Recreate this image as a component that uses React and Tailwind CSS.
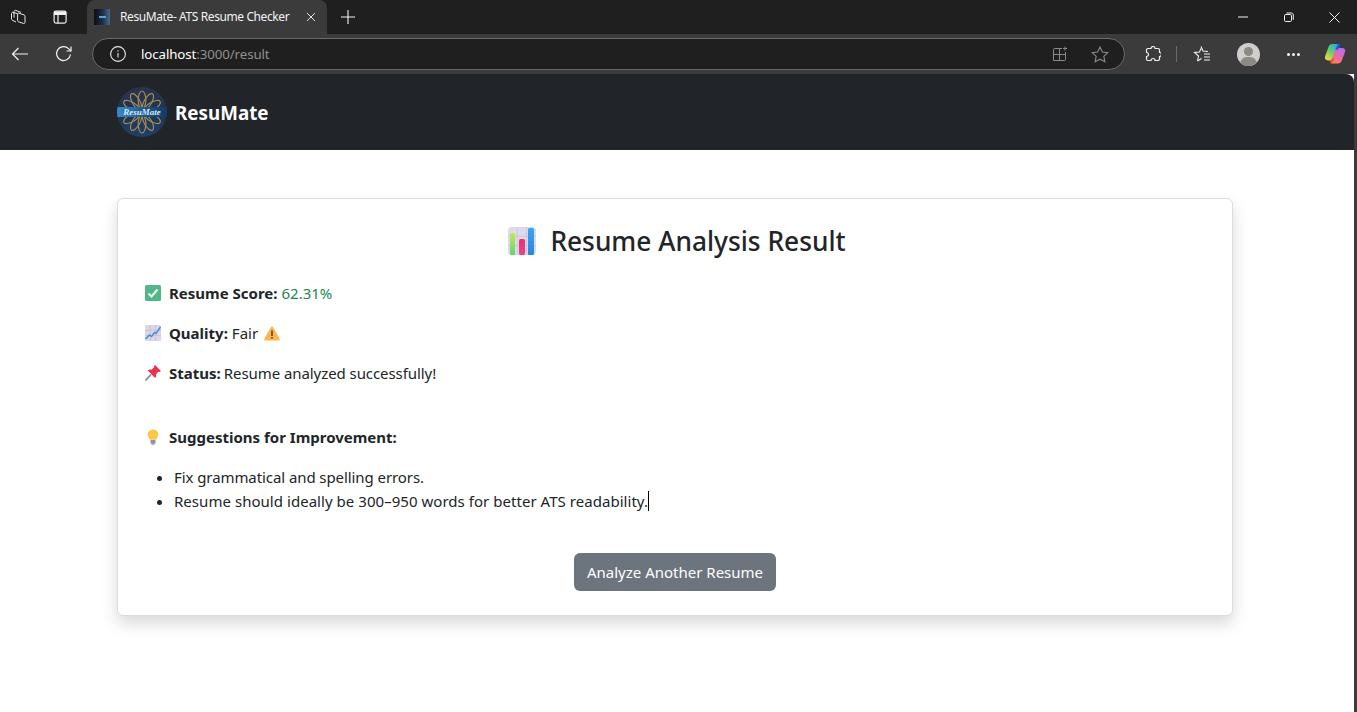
import React from "react";

const fontStack = "font-['Noto_Sans','Open_Sans',sans-serif]";

function ChromeButton({ children, className = "" }) {
  return <div className={`flex items-center justify-center ${className}`}>{children}</div>;
}

function TabsIcon() {
  return (
    <svg width="18" height="18" viewBox="0 0 18 18" fill="none" stroke="#e8e8e8" strokeWidth="1">
      <path d="M9.500 5l5.700 2c.5.2.8.6.8 1.100v6.400c0 .7-.7 1.200-1.400 1l-5-1.700c-.6-.2-1-.7-1-1.300V6c0-.7.3-1.200.9-1z" />
      <path d="M7 14L3.400 12.300c-.5-.3-.9-.8-.9-1.400V5.500c0-.8.7-1.300 1.500-1.100l4 1.100" />
      <path d="M5 9.500V3.600c0-.9.800-1.500 1.700-1.200l5.300 2" />
    </svg>
  );
}

function VerticalTabsIcon() {
  return (
    <svg width="16" height="16" viewBox="0 0 16 16" fill="none" stroke="#f0f0f0" strokeWidth="1.200">
      <rect x="2.100" y="2.100" width="12" height="12" rx="1.800" />
      <path d="M2.500 3h11v2.500h-11z" fill="#f0f0f0" />
      <path d="M6 5v9" />
    </svg>
  );
}

function Favicon() {
  return (
    <div className="w-4 h-4 bg-gradient-to-r from-[#0b0f18] via-[#1c2b45] to-[#4a6a94] flex items-center justify-center shrink-0">
      <div className="w-[7px] h-[2px] bg-[#5f9fd4]" />
    </div>
  );
}

function LogoBadge() {
  const petals = [0, 30, 60, 90, 120, 150, 180, 210, 240, 270, 300, 330];
  return (
    <div className="relative w-[50px] h-[50px] rounded-full overflow-hidden bg-gradient-to-b from-[#28344a] via-[#1e3450] to-[#1f4068] shrink-0">
      <svg width="50" height="50" viewBox="0 0 50 50" fill="none" stroke="#a98a55" strokeWidth="1.200">
        {petals.map((deg) => (
          <ellipse key={deg} cx="25" cy="13" rx="3.800" ry="9" transform={`rotate(${deg} 25 25)`} />
        ))}
      </svg>
      <div className="absolute left-0 right-0 top-[20px] h-[10px] bg-gradient-to-r from-[#3a8ccb] via-[#1d5c94] to-[#123a66] flex items-center justify-center">
        <span className="font-['Liberation_Serif',serif] italic font-bold text-[9px] leading-none text-[#dfe8f2]">ResuMate</span>
      </div>
    </div>
  );
}

function CheckEmoji() {
  return (
    <svg width="16" height="16" viewBox="0 0 16 16">
      <rect width="16" height="16" rx="1.500" fill="#52b788" />
      <path d="M3.500 8.500l3 3 6-7" fill="none" stroke="#f4fff8" strokeWidth="2" />
    </svg>
  );
}

function ChartUpEmoji() {
  return (
    <svg width="16" height="16" viewBox="0 0 16 16">
      <rect width="16" height="16" rx="1.500" fill="#dcd6e6" />
      <path d="M5.300 0v16M10.600 0v16M0 5.300h16M0 10.600h16" stroke="#bdb5cc" strokeWidth="0.600" />
      <path d="M0.500 14l4-4 2 1.500 3-4 1.500 1L15.500 2" fill="none" stroke="#3f8fd8" strokeWidth="1.500" />
    </svg>
  );
}

function WarningEmoji() {
  return (
    <svg width="16" height="15" viewBox="0 0 16 15">
      <path d="M8 .5c.5 0 .9.3 1.100.7l6.600 11.600c.4.8-.1 1.700-1 1.700H1.300c-.9 0-1.400-.9-1-1.700L6.900 1.200C7.100.8 7.500.5 8 .5z" fill="#fbb552" />
      <rect x="7.300" y="4.500" width="1.400" height="5.500" fill="#4a3420" />
      <rect x="7.300" y="11" width="1.400" height="1.500" fill="#4a3420" />
    </svg>
  );
}

function PinEmoji() {
  return (
    <svg width="16" height="16" viewBox="0 0 16 16">
      <path d="M0.500 15.500l5.500-6" stroke="#8a8a94" strokeWidth="1.800" />
      <path d="M10 0l6 6-1.600 1.100-1.200-.3-2.200 2.600c.4 1.400 0 2.700-.9 3.600L2.700 5.600c.9-.9 2.200-1.300 3.600-.9L9 2.500l-.2-1.300z" fill="#e8324e" />
    </svg>
  );
}

function BulbEmoji() {
  return (
    <svg width="12" height="16" viewBox="0 0 12 16">
      <path d="M6 .5c3 0 5.300 2.200 5.300 5 0 2.200-1.500 3.300-2.300 5.200H3c-.8-1.900-2.300-3-2.300-5.200C.7 2.700 3 .5 6 .5z" fill="#fbc748" />
      <rect x="3.500" y="11" width="5" height="3.500" fill="#9b8bb0" />
      <rect x="4.500" y="14.500" width="3" height="1" fill="#6f6284" />
    </svg>
  );
}

function BarsEmoji() {
  return (
    <svg width="28" height="28" viewBox="0 0 28 28">
      <defs>
        <linearGradient id="barGreen" x1="0" y1="0" x2="0" y2="1">
          <stop offset="0" stopColor="#c6e84e" />
          <stop offset="1" stopColor="#5fd47a" />
        </linearGradient>
        <linearGradient id="barPink" x1="0" y1="0" x2="0" y2="1">
          <stop offset="0" stopColor="#e8327a" />
          <stop offset="1" stopColor="#f0408a" />
        </linearGradient>
        <linearGradient id="barBlue" x1="0" y1="0" x2="0" y2="1">
          <stop offset="0" stopColor="#3aa4f0" />
          <stop offset="1" stopColor="#2b86e0" />
        </linearGradient>
      </defs>
      <rect width="28" height="28" rx="3.500" fill="#dfdae8" />
      <path d="M9.300 0v28M18.600 0v28M0 9.300h28M0 18.600h28" stroke="#c8c2d4" strokeWidth="0.700" />
      <path d="M2 7.500A1.500 1.500 0 0 1 3.500 6h2A1.500 1.500 0 0 1 7 7.500V28H3.500A1.500 1.500 0 0 1 2 26.500z" fill="url(#barGreen)" />
      <rect x="11" y="12" width="6" height="16" rx="1.500" fill="url(#barPink)" />
      <path d="M20 2.500A1.500 1.500 0 0 1 21.500 1h3A1.500 1.500 0 0 1 26 2.500V26.500A1.500 1.500 0 0 1 24.500 28H20z" fill="url(#barBlue)" />
    </svg>
  );
}

function CopilotIcon() {
  return (
    <svg width="22" height="22" viewBox="0 0 22 22">
      <defs>
        <linearGradient id="copilotA" x1="0.800" y1="0" x2="0.200" y2="1">
          <stop offset="0" stopColor="#25a6ee" />
          <stop offset="0.500" stopColor="#5fd36a" />
          <stop offset="1" stopColor="#f7d93e" />
        </linearGradient>
        <linearGradient id="copilotB" x1="0.800" y1="0" x2="0.200" y2="1">
          <stop offset="0" stopColor="#b46cf2" />
          <stop offset="0.600" stopColor="#f06aa0" />
          <stop offset="1" stopColor="#ff8a4a" />
        </linearGradient>
      </defs>
      <path d="M8 1h6c1 0 1.500.6 1.300 1.500L12 15c-.4 1.500-1.500 2.500-3 2.500H5.500C2 17.500.3 16 1.200 13L4.500 4C5.200 2 6.300 1 8 1z" fill="url(#copilotA)" />
      <path d="M13 5h5c2.500 0 3.800 1.500 3 4l-3 8c-.7 2-2 3.500-4 3.500H8c-1 0-1.500-.7-1.200-1.500L11 7c.3-1.200 1-2 2-2z" fill="url(#copilotB)" />
      <path d="M14 1c1.500 0 2.200 1 1.800 2L14 6.500h-2.800z" fill="#1e55e0" />
      <path d="M8 20.500c-1.500 0-2.200-1-1.800-2L8 15.500h2.800z" fill="#f0503c" />
    </svg>
  );
}

function BrowserChrome() {
  return (
    <div className="shrink-0">
      {/* title bar */}
      <div className="h-[34px] bg-[#1f1f1f] flex items-stretch">
        <ChromeButton className="w-[35px] pl-[1px]"><TabsIcon /></ChromeButton>
        <ChromeButton className="w-[49px]"><VerticalTabsIcon /></ChromeButton>
        <div className="w-[240px] ml-[3px] bg-[#3b3b3b] rounded-t-lg flex items-center pl-[7px] pr-[11px]">
          <Favicon />
          <span className="ml-[10px] text-[12px] text-[#f2f2f2] whitespace-nowrap font-['Noto_Sans',sans-serif] tracking-[-0.4px] flex-1">ResuMate- ATS Resume Checker</span>
          <svg width="10" height="10" viewBox="0 0 10 10" stroke="#e5e5e5" strokeWidth="1"><path d="M1 1l8 8M9 1l-8 8" /></svg>
        </div>
        <ChromeButton className="w-[42px]">
          <svg width="14" height="14" viewBox="0 0 14 14" stroke="#f2f2f2" strokeWidth="1.100"><path d="M7 0v14M0 7h14" /></svg>
        </ChromeButton>
        <div className="flex-1" />
        <ChromeButton className="w-[46px]">
          <svg width="10" height="10" viewBox="0 0 10 10" stroke="#f2f2f2" strokeWidth="1"><path d="M0 5h10" /></svg>
        </ChromeButton>
        <ChromeButton className="w-[46px]">
          <svg width="10" height="10" viewBox="0 0 10 10" fill="none" stroke="#f2f2f2" strokeWidth="1"><rect x="0.500" y="2.500" width="7" height="7" rx="1.200" /><path d="M2.500 1h5c1 0 1.800.8 1.800 1.800v5" /></svg>
        </ChromeButton>
        <ChromeButton className="w-[45px]">
          <svg width="11" height="11" viewBox="0 0 11 11" stroke="#f2f2f2" strokeWidth="1"><path d="M.5.500l10 10M10.500.500l-10 10" /></svg>
        </ChromeButton>
      </div>
      {/* toolbar */}
      <div className="h-[40px] bg-[#3b3b3b] flex items-center">
        <ChromeButton className="w-[40px]">
          <svg width="18" height="14" viewBox="0 0 18 14" fill="none" stroke="#f2f2f2" strokeWidth="1.200"><path d="M1.500 7H17M7.500 1L1.500 7l6 6" /></svg>
        </ChromeButton>
        <ChromeButton className="w-[48px]">
          <svg width="18" height="18" viewBox="0 0 18 18" fill="none" stroke="#f2f2f2" strokeWidth="1.200"><path d="M15.500 9.500A7 7 0 1 1 13.500 3.600L16 6" /><path d="M16 1.500V6h-4.500" /></svg>
        </ChromeButton>
        <div className="w-[1033px] ml-[4px] h-[32px] rounded-full bg-[#1f1f1f] border border-[#6b6b6b] flex items-center pl-[17px] pr-[15px]">
          <svg width="16" height="16" viewBox="0 0 16 16" fill="none" stroke="#e8e8e8" strokeWidth="1.100"><circle cx="8" cy="8" r="7.400" /><path d="M8 7v4.500" /><path d="M8 4.300v1.300" /></svg>
          <span className="ml-[15px] mt-[2px] text-[13.300px] text-[#8f8f8f] whitespace-nowrap font-['Noto_Sans',sans-serif] tracking-[-0.1px]"><span className="text-white">localhost</span>:3000/result</span>
          <div className="flex-1" />
          <svg width="16" height="16" viewBox="0 0 16 16" fill="none" stroke="#8a8a8a" strokeWidth="1"><path d="M10 2.500H2.500a1 1 0 0 0-1 1v11h11a1 1 0 0 0 1-1V6" /><path d="M1.500 8.500h12M7.500 2.500v12" /><path d="M13 .5v4M11 2.500h4" /></svg>
          <svg className="ml-[23px]" width="18" height="17" viewBox="0 0 18 17" fill="none" stroke="#8a8a8a" strokeWidth="1.100"><path d="M9 1l2.400 5 5.400.7-4 3.700 1.100 5.400L9 13.200l-4.900 2.600 1.100-5.400-4-3.700 5.400-.7z" /></svg>
        </div>
        <ChromeButton className="w-[44px] ml-[6px]">
          <svg width="16" height="16" viewBox="0 0 16 16" fill="none" stroke="#f2f2f2" strokeWidth="1.200"><path d="M6 2.500a2 2 0 0 1 4 0H13a1.500 1.500 0 0 1 1.500 1.500v2.500a2 2 0 0 1 0 4v2.500A1.500 1.500 0 0 1 13 14.500H10a2 2 0 0 0-4 0H3a1.500 1.500 0 0 1-1.500-1.500v-2.500a2 2 0 0 0 0-4V4A1.500 1.500 0 0 1 3 2.500z" /></svg>
        </ChromeButton>
        <div className="w-px h-4 ml-[1px] bg-[#6a6a6a]" />
        <ChromeButton className="w-[49px]">
          <svg width="18" height="18" viewBox="0 0 18 18" fill="none" stroke="#f2f2f2" strokeWidth="1.100"><path d="M8 1.500l2 4.500 5 .5M4.500 16l1-5-4-3.500 5-.5 1.500-3.500M4.500 16l4-2.500" /><path d="M11 9h6M11 12h6M11 15h6" /></svg>
        </ChromeButton>
        <ChromeButton className="w-[44px]">
          <div className="relative w-[23px] h-[23px] rounded-full bg-[#d1cfcb] overflow-hidden">
            <div className="absolute left-[7px] top-[4px] w-[9px] h-[9px] rounded-full bg-[#8c8a87]" />
            <div className="absolute left-[3px] top-[14px] w-[17px] h-[14px] rounded-full bg-[#8c8a87]" />
          </div>
        </ChromeButton>
        <ChromeButton className="w-[46px] gap-[2px]">
          <span className="w-[3px] h-[3px] rounded-full bg-[#f2f2f2]" />
          <span className="w-[3px] h-[3px] rounded-full bg-[#f2f2f2]" />
          <span className="w-[3px] h-[3px] rounded-full bg-[#f2f2f2]" />
        </ChromeButton>
        <ChromeButton className="w-[38px]"><CopilotIcon /></ChromeButton>
      </div>
    </div>
  );
}

function Navbar() {
  return (
    <nav className="h-[76px] bg-[#212529] rounded-tr-lg flex items-center pl-[117px]">
      <LogoBadge />
      <span className="ml-2 mt-[3px] text-[18.800px] font-bold text-white">ResuMate</span>
    </nav>
  );
}

function ResultCard() {
  return (
    <div className="mt-[48px] ml-[117px] mr-[121px] h-[418px] bg-white border border-[#dcdcdc] rounded-[6px] shadow-[0_8px_16px_rgba(0,0,0,0.15)] pl-[27px] pr-[27px] pt-[25px] text-[#212529]">
      <h1 className="flex items-center justify-center pl-[4px] text-[26.300px] leading-[34px] font-medium">
        <BarsEmoji />
        <span className="ml-[14px]">Resume Analysis Result</span>
      </h1>
      <p className="mt-[23px] h-6 flex items-center text-[15px]">
        <CheckEmoji />
        <b className="ml-2 font-bold">Resume Score:</b>
        <span className="ml-1 text-[#198754]">62.31%</span>
      </p>
      <p className="mt-4 h-6 flex items-center text-[15px]">
        <ChartUpEmoji />
        <b className="ml-2 font-bold">Quality:</b>
        <span className="ml-1">Fair</span>
        <span className="ml-[6px]"><WarningEmoji /></span>
      </p>
      <p className="mt-4 h-6 flex items-center text-[15px]">
        <PinEmoji />
        <b className="ml-2 font-bold">Status:</b>
        <span className="ml-[3px] tracking-[-0.07px]">Resume analyzed successfully!</span>
      </p>
      <h2 className="mt-[40px] h-6 flex items-center text-[15px] font-bold">
        <span className="w-4 flex justify-center"><BulbEmoji /></span>
        <span className="ml-2">Suggestions for Improvement:</span>
      </h2>
      <ul className="mt-4 pl-[29px] list-disc text-[15px] leading-6">
        <li className="tracking-[-0.08px]">Fix grammatical and spelling errors.</li>
        <li className="tracking-[0.04px]">
          <span className="border-r border-black">Resume should ideally be 300–950 words for better ATS readability.</span>
        </li>
      </ul>
      <div className="mt-[40px] flex justify-center">
        <button className="h-[38px] w-[202px] bg-[#6c757d] text-white text-[15px] rounded-[6px]">Analyze Another Resume</button>
      </div>
    </div>
  );
}

export default function App() {
  return (
    <div className={`h-[712px] overflow-hidden flex flex-col bg-[#3b3b3b] ${fontStack}`}>
      <BrowserChrome />
      <div className="flex-1 mr-[3px] bg-white">
        <Navbar />
        <ResultCard />
      </div>
    </div>
  );
}
